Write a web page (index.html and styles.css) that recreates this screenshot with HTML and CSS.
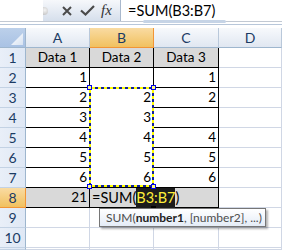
FILE: index.html
```html
<!DOCTYPE html>
<html>
<head>
<meta charset="utf-8">
<link rel="stylesheet" href="styles.css">
</head>
<body>
<div class="fbar">
  <div class="namebox"></div>
  <div class="tools">
    <span class="dot"></span>
    <svg class="ico-x" width="10" height="10" viewBox="0 0 10 10"><path d="M1 1L9 9M9 1L1 9" stroke="#4a4a4a" stroke-width="2" fill="none"/></svg>
    <svg class="ico-check" width="15" height="11" viewBox="0 0 15 11"><path d="M1 5.5L5.5 9.5L14 1" stroke="#4a4a4a" stroke-width="2.2" fill="none"/></svg>
    <span class="fx">fx</span>
  </div>
  <div class="finput">=SUM(B3:B7)<span class="grip"></span></div>
</div>
<div class="fsep"></div>
<div class="sheet">
  <div class="c corner"></div><div class="c ch">A</div><div class="c ch sel">B</div><div class="c ch">C</div><div class="c ch">D</div>

  <div class="c rh">1</div><div class="c t g ctr">Data 1</div><div class="c t g ctr">Data 2</div><div class="c t g ctr">Data 3</div><div class="c"></div>
  <div class="c rh">2</div><div class="c t num">1</div><div class="c t num"></div><div class="c t num">1</div><div class="c"></div>
  <div class="c rh">3</div><div class="c t num">2</div><div class="c t num nb">2</div><div class="c t num">2</div><div class="c"></div>
  <div class="c rh">4</div><div class="c t num">3</div><div class="c t num nb">3</div><div class="c t num"></div><div class="c"></div>
  <div class="c rh">5</div><div class="c t num">4</div><div class="c t num nb">4</div><div class="c t num">4</div><div class="c"></div>
  <div class="c rh">6</div><div class="c t num">5</div><div class="c t num nb">5</div><div class="c t num">5</div><div class="c"></div>
  <div class="c rh">7</div><div class="c t num">6</div><div class="c t num">6</div><div class="c t num">6</div><div class="c"></div>
  <div class="c rh sel">8</div><div class="c t g num">21</div><div class="c t g edit">=SUM(<span class="hl">B3:B7</span>)</div><div class="c t g"></div><div class="c"></div>
  <div class="c rh">9</div><div class="c"></div><div class="c"></div><div class="c"></div><div class="c"></div>
  <div class="c rh">10</div><div class="c"></div><div class="c"></div><div class="c"></div><div class="c"></div>
  <div class="c rh"></div><div class="c"></div><div class="c"></div><div class="c"></div><div class="c"></div>

  <div class="ants"></div>
  <span class="handle h-tl"></span>
  <span class="handle h-tr"></span>
  <span class="handle h-bl"></span>
  <span class="handle h-br"></span>
  <span class="fillh"></span>
  <div class="tip">SUM(<b>number1</b>, [number2], ...)</div>
</div>
</body>
</html>
```

FILE: styles.css
```css
* { box-sizing: border-box; }
html, body { margin: 0; padding: 0; }
body {
  width: 282px;
  height: 250px;
  overflow: hidden;
  background: #fff;
  font-family: Lato, "Liberation Sans", sans-serif;
  color: #000;
}

/* formula bar */
.fbar {
  display: flex;
  height: 22px;
  border-bottom: 1px solid #c2c9d3;
}
.namebox { width: 43px; }
.tools {
  width: 78px;
  display: flex;
  align-items: center;
  background: linear-gradient(#f6f8fb, #d6dfec);
  border-right: 1px solid #a9b8cc;
  overflow: hidden;
}
.dot {
  flex: none;
  width: 8px;
  height: 8px;
  border-radius: 50%;
  background: radial-gradient(circle at 60% 40%, #f4f4f4, #b5b5b5);
  margin-left: -3px;
}
.ico-x { flex: none; margin-left: 14px; }
.ico-check { flex: none; margin-left: 8px; }
.fx {
  margin-left: 6px;
  font: italic 15px "Liberation Serif", serif;
  color: #333;
}
.finput {
  flex: 1;
  position: relative;
  padding-left: 7px;
  font-size: 14.5px;
  line-height: 21px;
}
.grip {
  position: absolute;
  left: 22px;
  bottom: -2px;
  width: 83px;
  height: 3px;
  border-radius: 2px;
  background: #c6d4e6;
}
.fsep {
  height: 3px;
  border-bottom: 1px solid #b8c7da;
  margin-bottom: 3px;
}

/* sheet */
.sheet {
  position: relative;
  display: grid;
  grid-template-columns: 26px 64px 64px 65px 63px;
  grid-template-rows: repeat(11, 20px) 2px;
}
.c {
  border-right: 1px solid #d0d7e5;
  border-bottom: 1px solid #d0d7e5;
  font-size: 13.5px;
  line-height: 19px;
  padding: 0 2px;
  white-space: nowrap;
  overflow: hidden;
}
.ch {
  background: linear-gradient(#f7f9fc, #e0e7f1);
  border-right-color: #b9c8da;
  border-bottom-color: #9eb6ce;
  color: #1b3b64;
  font-size: 14px;
  text-align: center;
}
.rh {
  background: linear-gradient(90deg, #e9eff8, #dfe8f5);
  border-right-color: #9eb6ce;
  border-bottom-color: #c3d2e4;
  color: #1b3b64;
  font-size: 14px;
  text-align: center;
}
.sel {
  background: linear-gradient(#f9dba2, #f1c15f);
  border-right-color: #f29536;
  border-bottom-color: #f29536;
}
.corner {
  position: relative;
  background: linear-gradient(#bcd0ea, #a9c2e4);
  border-right-color: #9eb6ce;
  border-bottom-color: #9eb6ce;
}
.corner::after {
  content: "";
  position: absolute;
  right: 2px;
  bottom: 2px;
  width: 12px;
  height: 12px;
  background: linear-gradient(135deg, #ffffff, #d8e3f2);
  clip-path: polygon(100% 0, 100% 100%, 0 100%);
}
.t { border-color: #000; }
.g { background: #d9d9d9; }
.ctr { text-align: center; }
.num { text-align: right; }
.nb { border-bottom-color: #fff; }
.edit {
  position: relative;
  z-index: 1;
  overflow: visible;
  font-size: 14.5px;
}
.hl {
  background: #1c1c1c;
  color: #ffef3a;
  padding: 1px 0 2px;
}

/* overlays */
.ants {
  position: absolute;
  left: 89px;
  top: 59px;
  width: 65px;
  height: 100px;
  background:
    repeating-linear-gradient(90deg, #10209a 0 3px, #ffff00 3px 6px) left top / 100% 2px no-repeat,
    repeating-linear-gradient(90deg, #10209a 0 3px, #ffff00 3px 6px) left bottom / 100% 2px no-repeat,
    repeating-linear-gradient(180deg, #10209a 0 3px, #ffff00 3px 6px) left top / 2px 100% no-repeat,
    repeating-linear-gradient(180deg, #10209a 0 3px, #ffff00 3px 6px) right top / 2px 100% no-repeat;
}
.handle {
  position: absolute;
  z-index: 2;
  width: 5px;
  height: 5px;
  border: 1px solid #0000ee;
  background: #ffff80;
}
.h-tl { left: 87px; top: 57px; }
.h-tr { left: 151px; top: 57px; }
.h-bl { left: 87px; top: 156px; }
.h-br { left: 151px; top: 156px; }
.fillh {
  position: absolute;
  left: 151px;
  top: 178px;
  width: 5px;
  height: 4px;
  background: #000;
  z-index: 2;
}
.tip {
  position: absolute;
  z-index: 3;
  left: 99px;
  top: 180px;
  width: 167px;
  height: 19px;
  padding-left: 6px;
  border: 1px solid #767676;
  background: linear-gradient(#ffffff, #e4ecf7);
  box-shadow: 2px 2px 2px rgba(0, 0, 0, 0.3);
  font-size: 12px;
  line-height: 17px;
  color: #4c4c4c;
  white-space: nowrap;
}
.tip b { color: #222; }
```
